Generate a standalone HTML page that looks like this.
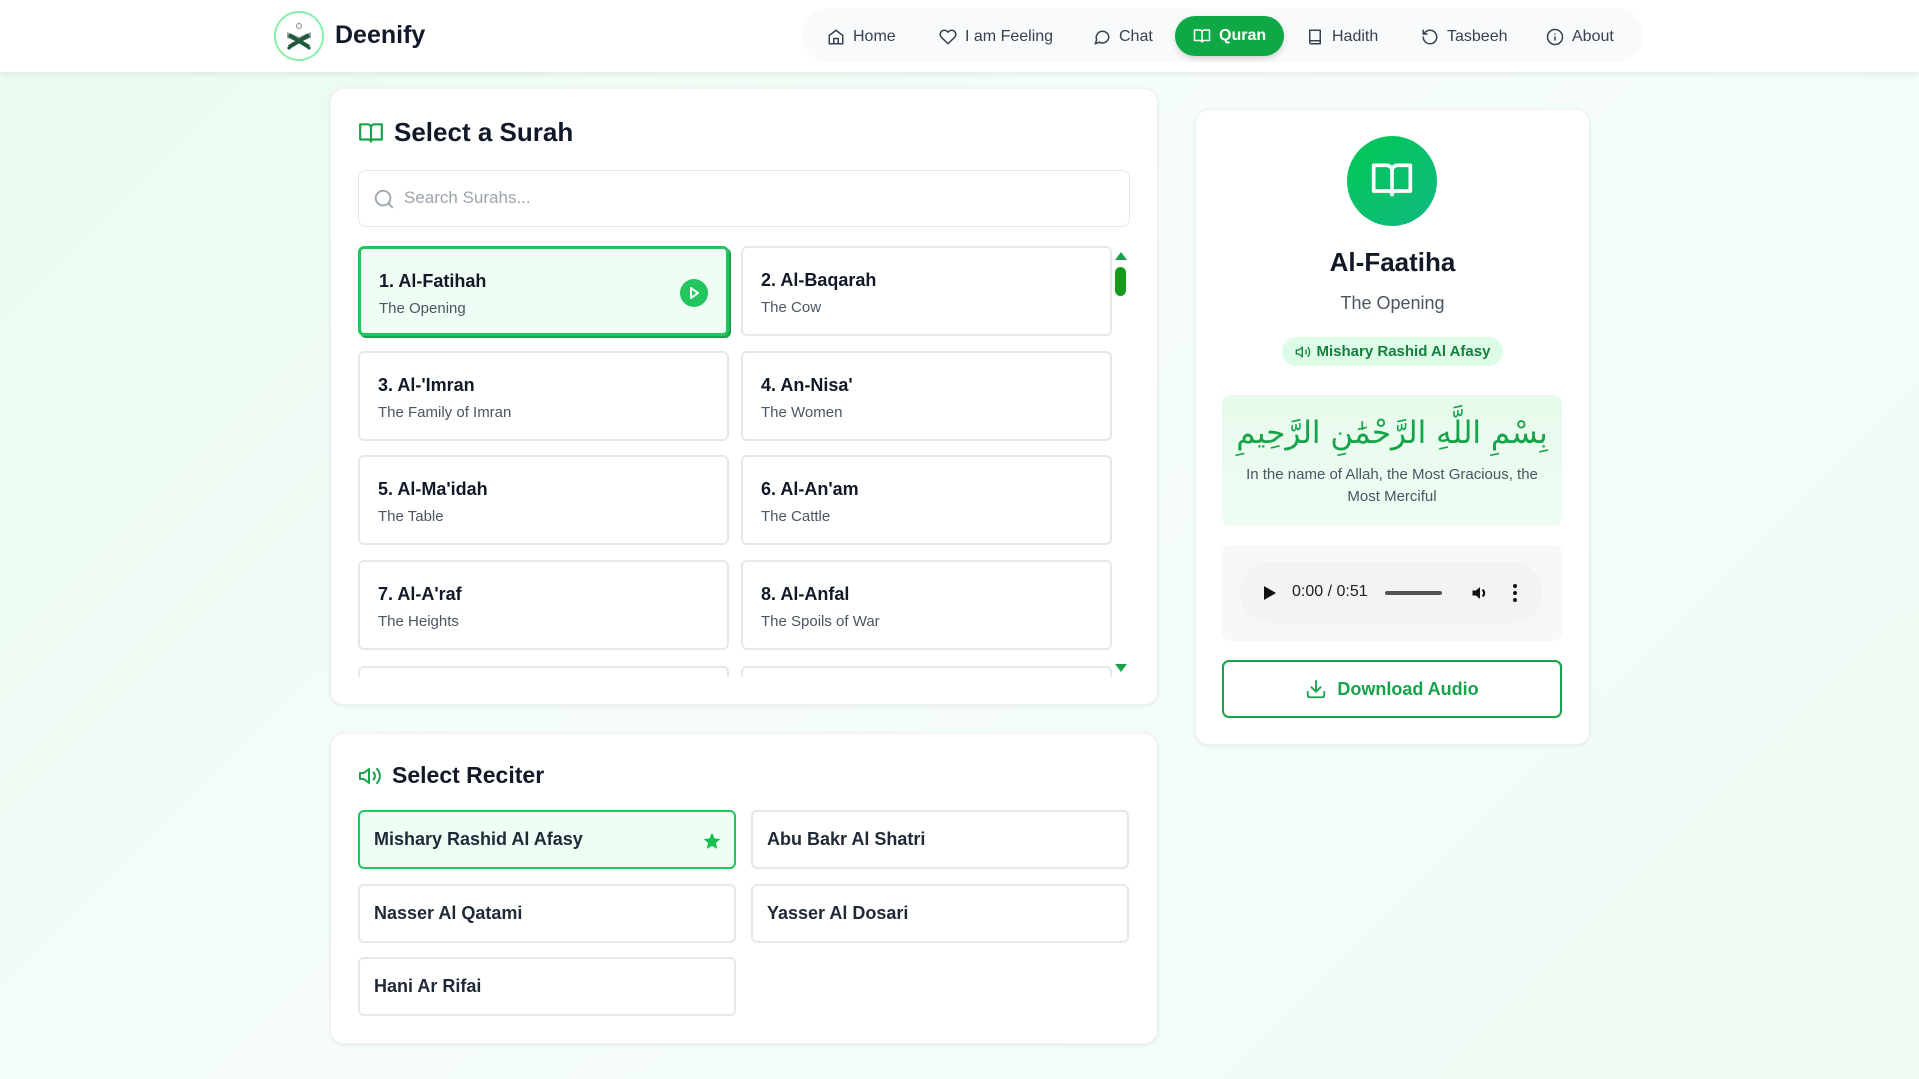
<!DOCTYPE html>
<html><head><meta charset="utf-8"><style>
*{box-sizing:border-box;margin:0;padding:0}
body{width:1919px;height:1079px;overflow:hidden;font-family:"Liberation Sans",sans-serif;background:linear-gradient(135deg,#e9fbf0 0%,#f6fdf9 45%,#f0fbf4 100%);position:relative;color:#111827}
.abs{position:absolute}
.hdr{left:0;top:0;width:1919px;height:72px;background:#fff;box-shadow:0 2px 6px rgba(0,0,0,.08)}
.logo{left:274px;top:11px;width:50px;height:50px;border-radius:50%;border:2px solid #86efac;background:#fff}
.brand{left:335px;top:21px;font-size:25px;font-weight:bold;color:#111827}
.nav{left:802px;top:8px;width:841px;height:54px;background:#f8fafc;border-radius:27px}
.ni{position:absolute;font-size:16px;color:#374151;display:flex;align-items:center;gap:8px;height:36px;top:11px}
.ni svg{width:18px;height:18px;fill:none;stroke:#374151;stroke-width:2;stroke-linecap:round;stroke-linejoin:round}
.q{background:#0ea844;color:#fff;font-weight:bold;border-radius:20px;padding:0 18px;height:40px;box-shadow:0 3px 6px rgba(0,0,0,.15)}
.q svg{stroke:#fff}
.card{background:#fff;border-radius:14px;box-shadow:0 1px 4px rgba(0,0,0,.08);border:1px solid #eef2f0}
.h2{font-size:26px;font-weight:bold;display:flex;align-items:center;gap:10px}
.h2 svg{fill:none;stroke:#16a34a;stroke-width:2;stroke-linecap:round;stroke-linejoin:round}
.item{position:absolute;width:371px;height:90px;border:2px solid #e5e7eb;border-radius:6px;background:#fff;padding:22px 18px}
.item b{display:block;font-size:18px;font-weight:bold;color:#111827}
.item span{display:block;font-size:15px;color:#4b5563;margin-top:8px}
.sel{background:#f0fdf4;border:3px solid #22c55e;box-shadow:2px 2px 0 #16a34a}
.rc{position:absolute;width:378px;height:59px;border:2px solid #e5e7eb;border-radius:6px;background:#fff;padding:0 14px;font-size:18px;font-weight:bold;color:#1f2937;display:flex;align-items:center}
</style></head><body>
<div class="abs hdr"></div>
<div class="abs logo"><svg width="46" height="46" viewBox="0 0 46 46"><circle cx="23" cy="13" r="2.5" fill="none" stroke="#888" stroke-width="1"/><path d="M11 19 L23 24 L35 19 L35 25 L23 29 L11 25Z" fill="#9ca3af"/><path d="M13 34 L33 22 M33 34 L13 22" stroke="#1f5b3a" stroke-width="4"/><path d="M12 36 L18 30 M34 36 L28 30" stroke="#1f5b3a" stroke-width="3"/></svg></div>
<div class="abs brand">Deenify</div>
<div class="abs nav">
<div class="ni" style="left:25px"><svg viewBox="0 0 24 24"><path d="M3 10l9-7 9 7v11H3z"/><path d="M9 21v-7h6v7"/></svg>Home</div>
<div class="ni" style="left:137px"><svg viewBox="0 0 24 24"><path d="M20.8 4.6a5.5 5.5 0 0 0-7.8 0L12 5.7l-1-1.1a5.5 5.5 0 0 0-7.8 7.8L12 21l8.8-8.6a5.5 5.5 0 0 0 0-7.8z"/></svg>I am Feeling</div>
<div class="ni" style="left:291px"><svg viewBox="0 0 24 24"><path d="M21 11.5a8.4 8.4 0 0 1-12.4 7.4L3 21l1.9-5.1A8.4 8.4 0 1 1 21 11.5z"/></svg>Chat</div>
<div class="ni q" style="left:373px;top:8px"><svg viewBox="0 0 24 24"><path d="M2 4h7a3 3 0 0 1 3 3v13a2 2 0 0 0-2-2H2zM22 4h-7a3 3 0 0 0-3 3v13a2 2 0 0 1 2-2h8z"/></svg>Quran</div>
<div class="ni" style="left:504px"><svg viewBox="0 0 24 24"><path d="M5 3h14v18H7a2 2 0 0 1-2-2z"/><path d="M5 17h14"/></svg>Hadith</div>
<div class="ni" style="left:619px"><svg viewBox="0 0 24 24"><path d="M3 12a9 9 0 1 0 3-6.7L3 8"/><path d="M3 3v5h5"/></svg>Tasbeeh</div>
<div class="ni" style="left:744px"><svg viewBox="0 0 24 24"><circle cx="12" cy="12" r="10"/><path d="M12 16v-4M12 8h0"/></svg>About</div>
</div>

<div class="abs card" style="left:330px;top:88px;width:828px;height:617px"></div>
<div class="abs h2" style="left:358px;top:117px"><svg width="26" height="26" viewBox="0 0 24 24"><path d="M2 4h7a3 3 0 0 1 3 3v13a2 2 0 0 0-2-2H2zM22 4h-7a3 3 0 0 0-3 3v13a2 2 0 0 1 2-2h8z"/></svg>Select a Surah</div>
<div class="abs" style="left:358px;top:170px;width:772px;height:57px;border:1px solid #e5e7eb;border-radius:8px;background:#fff"></div>
<svg class="abs" style="left:373px;top:188px" width="22" height="22" viewBox="0 0 24 24" fill="none" stroke="#9ca3af" stroke-width="2" stroke-linecap="round"><circle cx="11" cy="11" r="8"/><path d="M21 21l-4.3-4.3"/></svg>
<div class="abs" style="left:404px;top:188px;font-size:17px;color:#9ca3af">Search Surahs...</div>
<div class="abs" style="left:358px;top:246px;width:760px;height:431px;overflow:hidden">
<div class="item sel" style="left:0;top:0"><b>1. Al-Fatihah</b><span>The Opening</span>
<svg style="position:absolute;right:18px;top:30px" width="28" height="28" viewBox="0 0 28 28"><circle cx="14" cy="14" r="14" fill="#22c55e"/><path d="M11 9l7 5-7 5z" fill="none" stroke="#fff" stroke-width="2" stroke-linejoin="round"/></svg></div>
<div class="item" style="left:383px;top:0"><b>2. Al-Baqarah</b><span>The Cow</span></div>
<div class="item" style="left:0;top:105px"><b>3. Al-'Imran</b><span>The Family of Imran</span></div>
<div class="item" style="left:383px;top:105px"><b>4. An-Nisa'</b><span>The Women</span></div>
<div class="item" style="left:0;top:209px"><b>5. Al-Ma'idah</b><span>The Table</span></div>
<div class="item" style="left:383px;top:209px"><b>6. Al-An'am</b><span>The Cattle</span></div>
<div class="item" style="left:0;top:314px"><b>7. Al-A'raf</b><span>The Heights</span></div>
<div class="item" style="left:383px;top:314px"><b>8. Al-Anfal</b><span>The Spoils of War</span></div>
<div class="item" style="left:0;top:420px"></div>
<div class="item" style="left:383px;top:420px"></div>
</div>
<svg class="abs" style="left:1114px;top:251px" width="14" height="10"><path d="M1 9L7 1L13 9Z" fill="#16a34a"/></svg>
<div class="abs" style="left:1115px;top:267px;width:11px;height:29px;border-radius:6px;background:#159a1e"></div>
<svg class="abs" style="left:1114px;top:663px" width="14" height="10"><path d="M1 1L7 9L13 1Z" fill="#16a34a"/></svg>

<div class="abs card" style="left:330px;top:733px;width:828px;height:311px"></div>
<div class="abs h2" style="left:358px;top:762px;font-size:23px"><svg width="24" height="24" viewBox="0 0 24 24"><path d="M11 5L6 9H2v6h4l5 4z"/><path d="M15.5 8.5a5 5 0 0 1 0 7M19 5a10 10 0 0 1 0 14"/></svg>Select Reciter</div>
<div class="rc" style="left:358px;top:810px;background:#f0fdf4;border-color:#22c55e">Mishary Rashid Al Afasy<svg style="position:absolute;right:12px;top:19px" width="20" height="20" viewBox="0 0 24 24"><path d="M12 2l3 7 7 .6-5.3 4.7 1.6 7.2L12 17.8 5.7 21.5l1.6-7.2L2 9.6 9 9z" fill="#16c050"/></svg></div>
<div class="rc" style="left:751px;top:810px">Abu Bakr Al Shatri</div>
<div class="rc" style="left:358px;top:884px">Nasser Al Qatami</div>
<div class="rc" style="left:751px;top:884px">Yasser Al Dosari</div>
<div class="rc" style="left:358px;top:957px">Hani Ar Rifai</div>

<div class="abs card" style="left:1195px;top:109px;width:395px;height:636px"></div>
<div class="abs" style="left:1347px;top:136px;width:90px;height:90px;border-radius:50%;background:linear-gradient(135deg,#00c853,#10b981)"></div>
<svg class="abs" style="left:1370px;top:158px" width="44" height="44" viewBox="0 0 24 24" fill="none" stroke="#fff" stroke-width="2" stroke-linecap="round" stroke-linejoin="round"><path d="M2 4h7a3 3 0 0 1 3 3v13a2 2 0 0 0-2-2H2zM22 4h-7a3 3 0 0 0-3 3v13a2 2 0 0 1 2-2h8z"/></svg>
<div class="abs" style="left:1195px;width:395px;top:247px;text-align:center;font-size:26px;font-weight:bold">Al-Faatiha</div>
<div class="abs" style="left:1195px;width:395px;top:293px;text-align:center;font-size:18px;color:#4b5563">The Opening</div>
<div class="abs" style="left:1282px;top:337px;width:221px;height:29px;border-radius:15px;background:#dcfce7;color:#15803d;font-size:15px;font-weight:bold;display:flex;align-items:center;justify-content:center;gap:6px"><svg width="16" height="16" viewBox="0 0 24 24" fill="none" stroke="#15803d" stroke-width="2"><path d="M11 5L6 9H2v6h4l5 4z"/><path d="M15.5 8.5a5 5 0 0 1 0 7M19 5a10 10 0 0 1 0 14"/></svg>Mishary Rashid Al Afasy</div>
<div class="abs" style="left:1222px;top:395px;width:340px;height:131px;border-radius:8px;background:linear-gradient(180deg,#e6fbec,#eefcf2)"></div>
<div class="abs" dir="rtl" style="left:1222px;width:340px;top:412px;text-align:center;font-size:31px;color:#16a34a;font-family:'DejaVu Sans',sans-serif;line-height:42px;white-space:nowrap">بِسْمِ اللَّهِ الرَّحْمَٰنِ الرَّحِيمِ</div>
<div class="abs" style="left:1232px;width:320px;top:464px;text-align:center;font-size:15px;color:#4b5563;line-height:22px">In the name of Allah, the Most Gracious, the Most Merciful</div>
<div class="abs" style="left:1222px;top:545px;width:340px;height:96px;border-radius:8px;background:#f7f8fa"></div>
<div class="abs" style="left:1240px;top:562px;width:303px;height:61px;border-radius:31px;background:#f1f3f4"></div>
<svg class="abs" style="left:1263px;top:585px" width="14" height="16"><path d="M1 1L13 8L1 15Z" fill="#111"/></svg>
<div class="abs" style="left:1292px;top:583px;font-size:16px;color:#222">0:00 / 0:51</div>
<div class="abs" style="left:1385px;top:591px;width:57px;height:4px;border-radius:2px;background:#555"></div>
<svg class="abs" style="left:1470px;top:583px" width="20" height="20" viewBox="0 0 24 24"><path d="M3 9h4l5-4v14l-5-4H3z" fill="#111"/><path d="M15 8a5 5 0 0 1 0 8" stroke="#111" stroke-width="2.5" fill="none"/></svg>
<svg class="abs" style="left:1512px;top:583px" width="6" height="20"><circle cx="3" cy="3" r="2" fill="#111"/><circle cx="3" cy="10" r="2" fill="#111"/><circle cx="3" cy="17" r="2" fill="#111"/></svg>
<div class="abs" style="left:1222px;top:660px;width:340px;height:58px;border:2px solid #16a34a;border-radius:7px;background:#fff;color:#16a34a;font-size:18px;font-weight:bold;display:flex;align-items:center;justify-content:center;gap:10px"><svg width="22" height="22" viewBox="0 0 24 24" fill="none" stroke="#16a34a" stroke-width="2" stroke-linecap="round" stroke-linejoin="round"><path d="M21 15v4a2 2 0 0 1-2 2H5a2 2 0 0 1-2-2v-4M7 10l5 5 5-5M12 15V3"/></svg>Download Audio</div>
</body></html>
